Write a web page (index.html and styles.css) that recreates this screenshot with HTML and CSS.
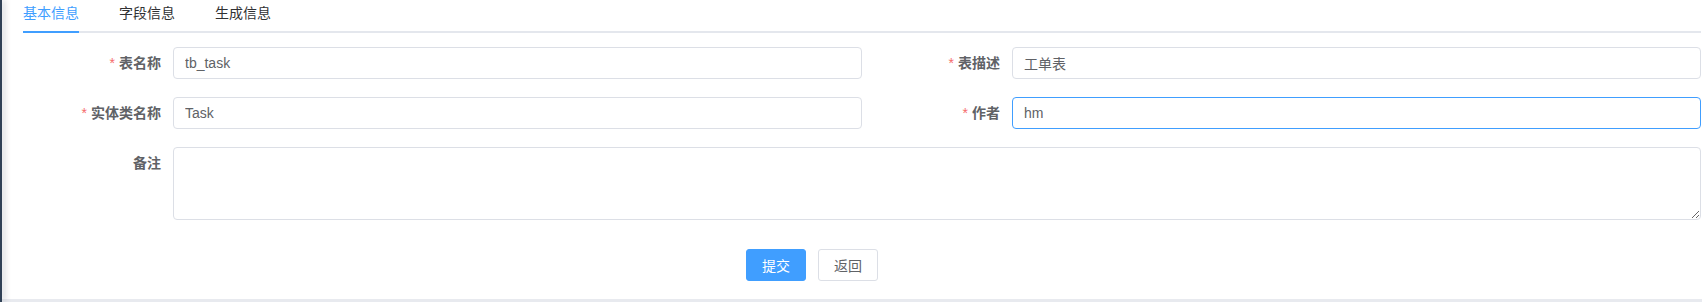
FILE: index.html
```html
<!DOCTYPE html>
<html>
    <head>
        <link rel="stylesheet" href="styles.css">
    </head>
    <body>
        <div class="sidebar-edge"></div>
        <div class="main">
            <div class="tabs">
                <div class="tab active">基本信息</div>
                <div class="tab">字段信息</div>
                <div class="tab">生成信息</div>
            </div>

            <form class="form">
                <div class="form-item">
                    <label class="form-label required">表名称</label>
                    <input class="form-input" type="text" value="tb_task">
                </div>
                <div class="form-item">
                    <label class="form-label required">表描述</label>
                    <input class="form-input" type="text" value="工单表">
                </div>
                <div class="form-item">
                    <label class="form-label required">实体类名称</label>
                    <input class="form-input" type="text" value="Task">
                </div>
                <div class="form-item">
                    <label class="form-label required">作者</label>
                    <input class="form-input focused" type="text" value="hm">
                </div>
                <div class="form-item wide">
                    <label class="form-label">备注</label>
                    <textarea class="form-textarea"></textarea>
                </div>
            </form>

            <div class="form-footer">
                <button class="btn btn-primary" type="button">提交</button>
                <button class="btn" type="button">返回</button>
            </div>
        </div>
    </body>
</html>
```

FILE: styles.css
```css
* {
    margin: 0;
    padding: 0;
    box-sizing: border-box;
    font-family: 'Liberation Sans', 'Noto Sans CJK SC', sans-serif;
}

body {
    display: flex;
    height: 100vh;
    background: #fff;
    overflow: hidden;
}

.sidebar-edge {
    position: relative;
    z-index: 1;
    width: 2px;
    background: #304156;
    box-shadow: 2px 0 6px rgba(0, 21, 41, 0.35);
}

.main {
    flex: 1;
    padding: 0 1px 0 21px;
    border-bottom: 3px solid #e8eaef;
}

.tabs {
    display: flex;
    gap: 40px;
    height: 33px;
    border-bottom: 2px solid #e4e7ed;
    margin-bottom: 14px;
}

.tab {
    height: 33px;
    line-height: 27px;
    font-size: 14px;
    color: #303133;
}

.tab.active {
    color: #409eff;
    border-bottom: 2px solid #409eff;
}

.form {
    display: grid;
    grid-template-columns: 1fr 1fr;
    row-gap: 18px;
}

.form-item {
    display: flex;
}

.form-item.wide {
    grid-column: span 2;
}

.form-label {
    width: 150px;
    flex-shrink: 0;
    padding-right: 12px;
    text-align: right;
    font-size: 14px;
    font-weight: bold;
    line-height: 32px;
    color: #606266;
}

.form-label.required:before {
    content: '*';
    color: #f56c6c;
    margin-right: 4px;
    font-weight: normal;
}

.form-input,
.form-textarea {
    flex: 1;
    min-width: 0;
    border: 1px solid #dcdfe6;
    border-radius: 4px;
    font-size: 14px;
    color: #606266;
    outline: none;
    background: #fff;
}

.form-input {
    height: 32px;
    padding: 0 11px;
}

.form-input.focused {
    border-color: #409eff;
}

.form-textarea {
    height: 73px;
    padding: 5px 11px;
    resize: vertical;
}

.form-footer {
    display: flex;
    gap: 12px;
    padding: 29px 0 0 723px;
}

.btn {
    width: 60px;
    height: 32px;
    font-size: 14px;
    border: 1px solid #dcdfe6;
    border-radius: 3px;
    background: #fff;
    color: #606266;
}

.btn-primary {
    background: #409eff;
    border-color: #409eff;
    color: #fff;
}
```
